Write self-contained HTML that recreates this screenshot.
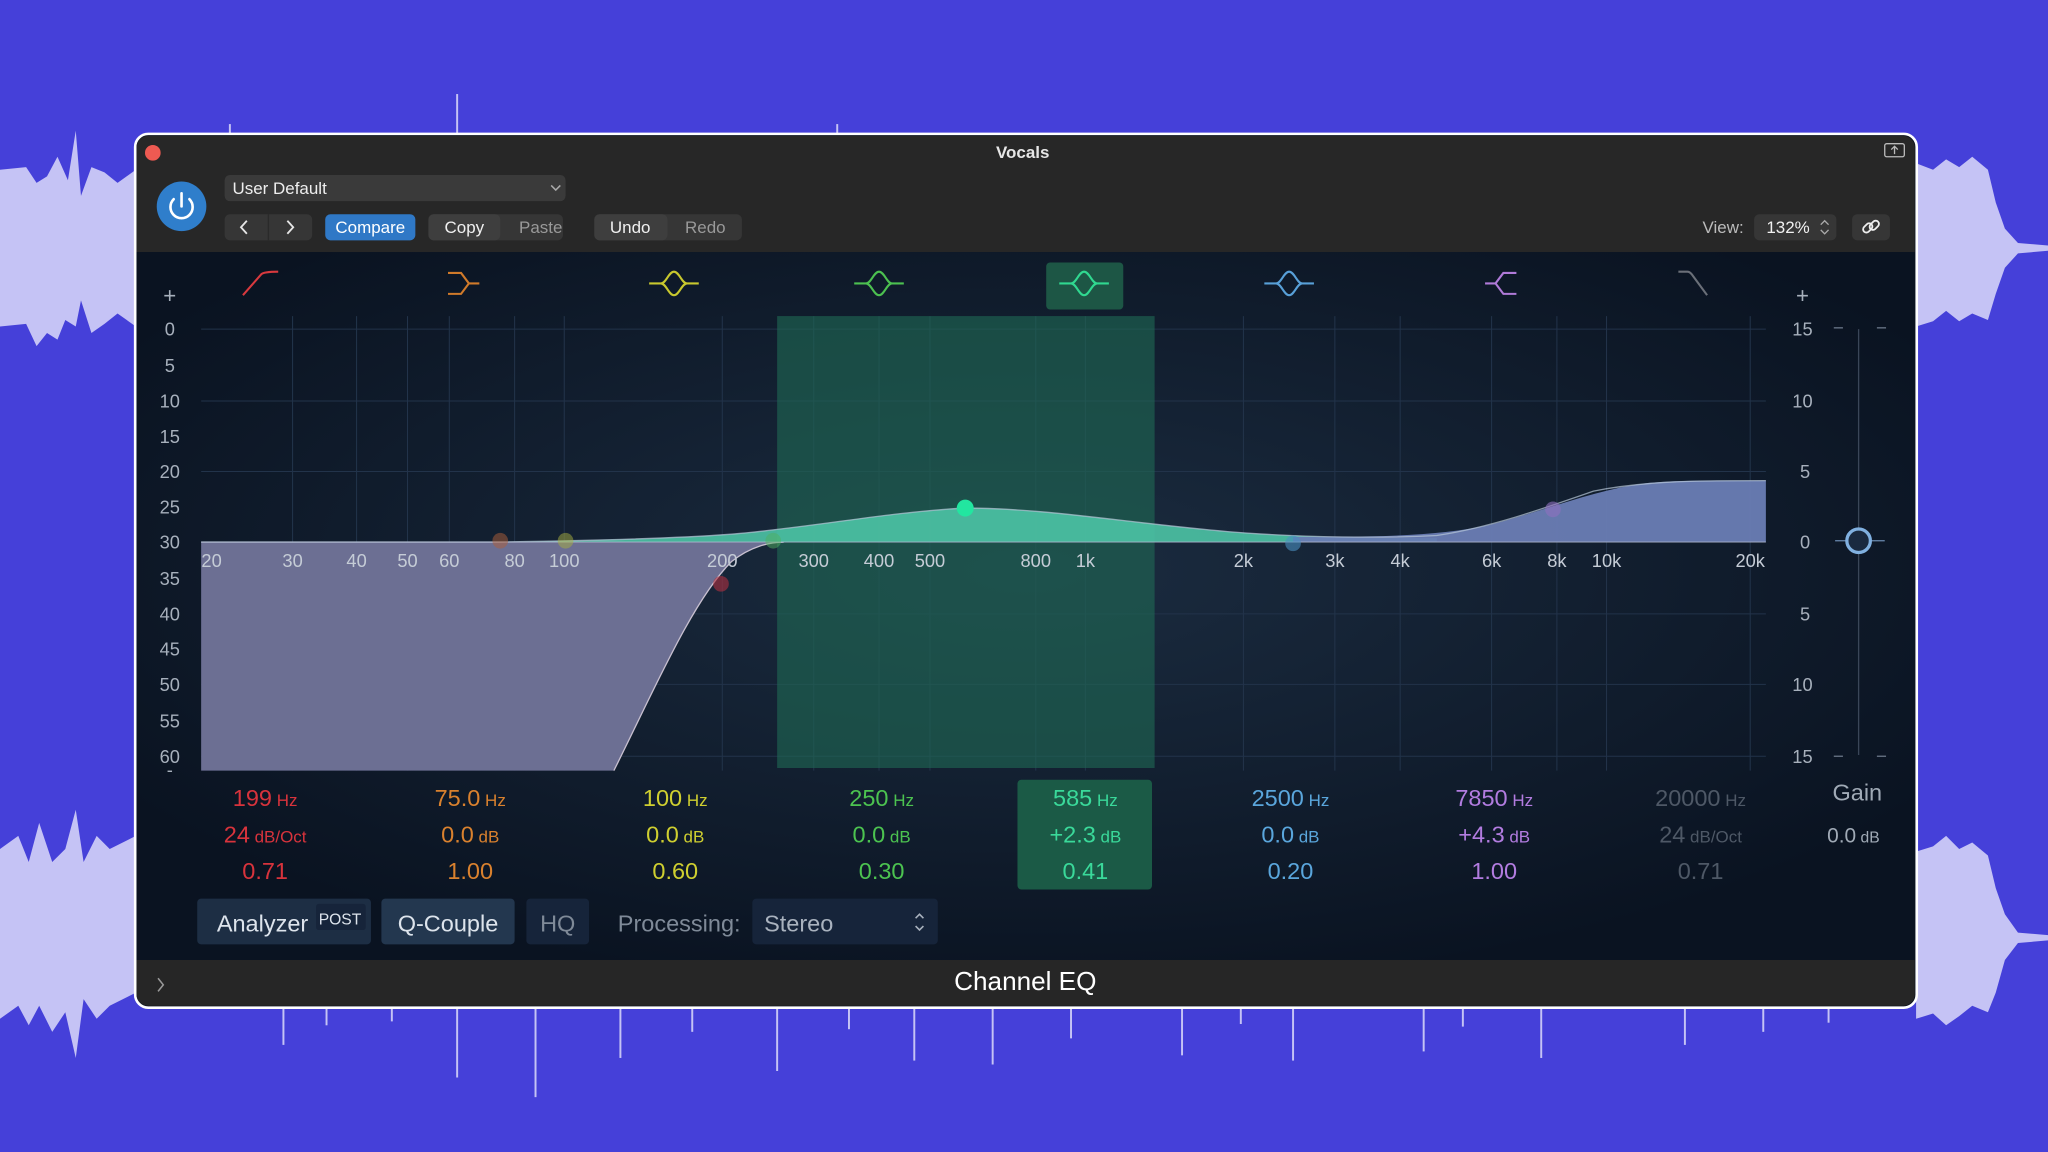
<!DOCTYPE html>
<html><head><meta charset="utf-8"><style>
html,body{margin:0;padding:0;background:#4540d9;overflow:hidden}
svg{display:block}
text{font-family:"Liberation Sans","DejaVu Sans",sans-serif}
</style></head><body>
<svg width="2048" height="1152" viewBox="0 0 1568 882" xmlns="http://www.w3.org/2000/svg">
<defs>
<radialGradient id="bg" cx="0.5" cy="0.45" r="0.6">
<stop offset="0" stop-color="#1b2c40"/><stop offset="1" stop-color="#0a1321"/>
</radialGradient>
</defs>
<rect width="1568" height="882" fill="#4540d9"/>
<g fill="#c5c3f5">
<path d="M0 130 L20 128 L28 140 L36 135 L44 120 L52 138 L58 100 L62 150 L70 128 L80 132 L90 140 L104 130 L104 250 L90 240 L80 248 L70 255 L62 230 L58 250 L50 245 L44 260 L36 255 L28 265 L20 248 L0 250 Z"/>
<path d="M0 650 L14 640 L22 660 L30 630 L40 660 L50 650 L58 620 L64 660 L74 640 L84 650 L104 640 L104 760 L84 770 L74 780 L64 765 L58 810 L50 775 L40 790 L30 770 L22 785 L14 770 L0 780 Z"/>
<path d="M1467 125 L1480 130 L1490 122 L1500 128 L1510 120 L1522 130 L1528 155 L1535 175 L1545 186 L1568 188 L1568 192 L1545 194 L1535 205 L1528 225 L1522 245 L1510 240 L1500 246 L1490 238 L1480 246 L1467 250 Z"/>
<path d="M1467 652 L1480 648 L1490 640 L1500 650 L1510 645 L1522 655 L1528 680 L1535 700 L1545 714 L1568 716 L1568 720 L1545 722 L1535 735 L1528 760 L1522 775 L1510 770 L1500 778 L1490 785 L1480 776 L1467 780 Z"/>
</g>
<g stroke="#c5c3f5" stroke-width="1.5">
<line x1="350" y1="72" x2="350" y2="103"/><line x1="176" y1="95" x2="176" y2="103"/><line x1="641" y1="95" x2="641" y2="103"/>
<line x1="410" y1="771" x2="410" y2="840"/><line x1="350" y1="771" x2="350" y2="825"/><line x1="217" y1="771" x2="217" y2="800"/>
<line x1="475" y1="771" x2="475" y2="810"/><line x1="595" y1="771" x2="595" y2="820"/><line x1="700" y1="771" x2="700" y2="812"/>
<line x1="760" y1="771" x2="760" y2="815"/><line x1="905" y1="771" x2="905" y2="808"/><line x1="990" y1="771" x2="990" y2="812"/>
<line x1="1090" y1="771" x2="1090" y2="805"/><line x1="1180" y1="771" x2="1180" y2="810"/><line x1="1290" y1="771" x2="1290" y2="800"/>
<line x1="530" y1="771" x2="530" y2="790"/><line x1="820" y1="771" x2="820" y2="795"/><line x1="1350" y1="771" x2="1350" y2="790"/>
<line x1="250" y1="771" x2="250" y2="785"/><line x1="300" y1="771" x2="300" y2="782"/><line x1="650" y1="771" x2="650" y2="788"/>
<line x1="950" y1="771" x2="950" y2="784"/><line x1="1120" y1="771" x2="1120" y2="786"/><line x1="1400" y1="771" x2="1400" y2="783"/>
</g>
<rect x="103.5" y="102.5" width="1364" height="669" rx="10" fill="#0b1320" stroke="#ffffff" stroke-width="2"/>
<path d="M104.5 193 V113 a9 9 0 0 1 9 -9 H1457 a9 9 0 0 1 9 9 V193 Z" fill="#272727"/>
<rect x="104.5" y="193" width="1361.5" height="542" fill="url(#bg)"/>
<path d="M104.5 735 H1466 V761 a9 9 0 0 1 -9 9 H113.5 a9 9 0 0 1 -9 -9 Z" fill="#262626"/>
<circle cx="117" cy="117" r="6" fill="#ee5a52"/>
<text x="783" y="121" font-size="13" font-weight="bold" fill="#e6e6e6" text-anchor="middle">Vocals</text>
<rect x="1443" y="110" width="15" height="10" rx="1.5" fill="none" stroke="#bbb" stroke-width="1"/>
<path d="M1450.5 112 v6 M1448 114.5 l2.5 -2.5 2.5 2.5" stroke="#bbb" fill="none" stroke-width="1"/>
<circle cx="139" cy="158" r="19" fill="#2f7ecb"/>
<path d="M133 152.5 a8.5 8.5 0 1 0 12 0" fill="none" stroke="#fff" stroke-width="2" stroke-linecap="round"/>
<line x1="139" y1="148" x2="139" y2="158" stroke="#fff" stroke-width="2" stroke-linecap="round"/>
<rect x="172" y="134" width="261" height="20" rx="4" fill="#3a3a3a"/>
<text x="178" y="148.5" font-size="13" fill="#eee">User Default</text>
<path d="M422 142 l3.5 3.5 3.5 -3.5" fill="none" stroke="#aaa" stroke-width="1.2"/>
<rect x="172" y="164" width="67" height="20" rx="4" fill="#363636"/>
<line x1="205.5" y1="164" x2="205.5" y2="184" stroke="#2a2a2a"/>
<path d="M189 169 l-4.5 5 4.5 5 M220 169 l4.5 5 -4.5 5" fill="none" stroke="#e6e6e6" stroke-width="1.4"/>
<rect x="249" y="164" width="69" height="20" rx="4" fill="#2f78c6"/>
<text x="283.5" y="178.5" font-size="13" fill="#fff" text-anchor="middle">Compare</text>
<rect x="328" y="164" width="103" height="20" rx="4" fill="#363636"/>
<rect x="328" y="164" width="55" height="20" rx="4" fill="#3e3e3e"/>
<text x="355.5" y="178.5" font-size="13" fill="#f0f0f0" text-anchor="middle">Copy</text>
<text x="414" y="178.5" font-size="13" fill="#999" text-anchor="middle">Paste</text>
<rect x="455" y="164" width="113" height="20" rx="4" fill="#363636"/>
<rect x="455" y="164" width="56" height="20" rx="4" fill="#3e3e3e"/>
<text x="482.5" y="178.5" font-size="13" fill="#f0f0f0" text-anchor="middle">Undo</text>
<text x="540" y="178.5" font-size="13" fill="#999" text-anchor="middle">Redo</text>
<text x="1335" y="178.5" font-size="13" fill="#bbb" text-anchor="end">View:</text>
<rect x="1343" y="164" width="63" height="20" rx="4" fill="#363636"/>
<text x="1369" y="178.5" font-size="13" fill="#f0f0f0" text-anchor="middle">132%</text>
<path d="M1394 172 l3 -3 3 3 M1394 176 l3 3 3 -3" fill="none" stroke="#aaa" stroke-width="1"/>
<rect x="1418" y="164" width="29" height="20" rx="4" fill="#363636"/>
<g fill="none" stroke="#eee" stroke-width="1.4"><rect x="1426" y="172" width="8" height="5" rx="2.5" transform="rotate(-45 1430 174.5)"/><rect x="1431" y="170" width="8" height="5" rx="2.5" transform="rotate(-45 1435 172.5)"/></g>
<g stroke="#22334a" stroke-width="0.8">
<line x1="154" x2="1352" y1="252" y2="252"/><line x1="154" x2="1352" y1="307" y2="307"/><line x1="154" x2="1352" y1="361" y2="361"/>
<line x1="154" x2="1352" y1="470" y2="470"/><line x1="154" x2="1352" y1="524" y2="524"/><line x1="154" x2="1352" y1="579" y2="579"/>
<line y1="242" y2="590" x1="224" x2="224"/><line y1="242" y2="590" x1="273" x2="273"/><line y1="242" y2="590" x1="312" x2="312"/>
<line y1="242" y2="590" x1="344" x2="344"/><line y1="242" y2="590" x1="394" x2="394"/><line y1="242" y2="590" x1="432" x2="432"/>
<line y1="242" y2="590" x1="553" x2="553"/><line y1="242" y2="590" x1="623" x2="623"/><line y1="242" y2="590" x1="673" x2="673"/>
<line y1="242" y2="590" x1="712" x2="712"/><line y1="242" y2="590" x1="793" x2="793"/><line y1="242" y2="590" x1="831" x2="831"/>
<line y1="242" y2="590" x1="952" x2="952"/><line y1="242" y2="590" x1="1022" x2="1022"/><line y1="242" y2="590" x1="1072" x2="1072"/>
<line y1="242" y2="590" x1="1142" x2="1142"/><line y1="242" y2="590" x1="1192" x2="1192"/><line y1="242" y2="590" x1="1230" x2="1230"/>
<line y1="242" y2="590" x1="1340" x2="1340"/>
</g>
<rect x="595" y="242" width="289" height="346" fill="#1f6a55" opacity="0.6"/>
<rect x="801" y="201" width="59" height="36" rx="3" fill="#1d5645"/>
<path d="M154 415 L154 590 L470 590 C500 530 530 460 560 430 C575 418 590 415 600 415 Z" fill="#6c6f93"/>
<path d="M470 590 C500 530 530 460 560 430 C575 418 590 415 600 415" fill="none" stroke="#c8c0d0" stroke-width="1"/>
<path d="M380 415 C450 414 520 412 560 409 C620 404 680 392 739 389 C800 389 860 400 940 407 C1000 412 1060 412 1100 412 L1100 415 Z" fill="#4cc3a5" opacity="0.9"/>
<path d="M990 415 L990 411 C1050 411 1100 411 1140 402 C1180 392 1220 375 1260 370 C1290 367 1320 368 1352 368 L1352 415 Z" fill="#6a7db4" opacity="0.95"/>
<path d="M154 415 L380 415 C450 414 520 412 560 409 C620 404 680 392 739 389 C800 389 860 400 940 407 C1000 412 1060 412 1100 410 C1140 404 1180 390 1220 376 C1260 368 1300 368 1352 368" fill="none" stroke="#b8c8d8" stroke-width="1" opacity="0.7"/>
<line x1="154" y1="415" x2="1352" y2="415" stroke="#b0b8d0" stroke-width="1" opacity="0.6"/>
<circle cx="383" cy="414" r="6" fill="#b0603a" opacity="0.5"/>
<circle cx="433" cy="414" r="6" fill="#a8b040" opacity="0.5"/>
<circle cx="552" cy="447" r="6" fill="#b03040" opacity="0.6"/>
<circle cx="592" cy="414" r="6" fill="#50b060" opacity="0.5"/>
<circle cx="990" cy="416" r="6" fill="#4a90c0" opacity="0.6"/>
<circle cx="1189" cy="390" r="6" fill="#9070c0" opacity="0.6"/>
<circle cx="739" cy="389" r="6.5" fill="#22e6a0"/>
<g fill="none" stroke-width="1.6">
<path d="M186 226 L200 210 Q202 208 213 208" stroke="#d8393e"/>
<path d="M343 209 h10 l6 8 h8 M343 225 h10 l6 -8" stroke="#d07a2a"/>
<path d="M497 217 h9 c4 0 6 -9 10 -9 c4 0 6 9 10 9 h9 M506 217 c4 0 6 9 10 9 c4 0 6 -9 10 -9" stroke="#c8c82e"/>
<path d="M654 217 h9 c4 0 6 -9 10 -9 c4 0 6 9 10 9 h9 M663 217 c4 0 6 9 10 9 c4 0 6 -9 10 -9" stroke="#4cc050"/>
<path d="M811 217 h9 c4 0 6 -9 10 -9 c4 0 6 9 10 9 h9 M820 217 c4 0 6 9 10 9 c4 0 6 -9 10 -9" stroke="#30d890"/>
<path d="M968 217 h9 c4 0 6 -9 10 -9 c4 0 6 9 10 9 h9 M977 217 c4 0 6 9 10 9 c4 0 6 -9 10 -9" stroke="#58a0d8"/>
<path d="M1161 209 h-10 l-6 8 h-8 M1161 225 h-10 l-6 -8" stroke="#b07ad8"/>
<path d="M1285 208 h7 q2 0 4 3 l11 15" stroke="#6a6f78"/>
</g>
<g font-size="14" fill="#a7b0bc" text-anchor="middle">
<text x="130" y="232" font-size="17">+</text>
<text x="130" y="257">0</text><text x="130" y="285">5</text><text x="130" y="312">10</text><text x="130" y="339">15</text>
<text x="130" y="366">20</text><text x="130" y="393">25</text><text x="130" y="420">30</text><text x="130" y="448">35</text>
<text x="130" y="475">40</text><text x="130" y="502">45</text><text x="130" y="529">50</text><text x="130" y="557">55</text>
<text x="130" y="584">60</text><text x="130" y="594">-</text>
<text x="1380" y="232" font-size="17">+</text>
<text x="1380" y="257">15</text><text x="1380" y="312">10</text><text x="1382" y="366">5</text><text x="1382" y="420">0</text>
<text x="1382" y="475">5</text><text x="1380" y="529">10</text><text x="1380" y="584">15</text>
</g>
<g stroke="#6a7688" stroke-width="1">
<line x1="1404" x2="1411" y1="251" y2="251"/><line x1="1437" x2="1444" y1="251" y2="251"/>
<line x1="1404" x2="1411" y1="579" y2="579"/><line x1="1437" x2="1444" y1="579" y2="579"/>
<line x1="1423" x2="1423" y1="252" y2="578" stroke="#3a4658"/>
<line x1="1405" x2="1443" y1="414" y2="414" stroke="#6a8ab0"/>
</g>
<circle cx="1423" cy="414" r="9" fill="#1a2a40" stroke="#80b0e0" stroke-width="2.5"/>
<g font-size="14" fill="#c5ccd6" text-anchor="middle">
<text x="162" y="434">20</text><text x="224" y="434">30</text><text x="273" y="434">40</text><text x="312" y="434">50</text>
<text x="344" y="434">60</text><text x="394" y="434">80</text><text x="432" y="434">100</text><text x="553" y="434">200</text>
<text x="623" y="434">300</text><text x="673" y="434">400</text><text x="712" y="434">500</text><text x="793" y="434">800</text>
<text x="831" y="434">1k</text><text x="952" y="434">2k</text><text x="1022" y="434">3k</text><text x="1072" y="434">4k</text>
<text x="1142" y="434">6k</text><text x="1192" y="434">8k</text><text x="1230" y="434">10k</text><text x="1340" y="434">20k</text>
</g>
<rect x="779" y="597" width="103" height="84" rx="3" fill="#1b5a46"/>
<g font-size="18" text-anchor="middle">
<g fill="#d8333c"><text x="203" y="617">199<tspan font-size="13"> Hz</tspan></text><text x="203" y="645">24<tspan font-size="13"> dB/Oct</tspan></text><text x="203" y="673">0.71</text></g>
<g fill="#d9812e"><text x="360" y="617">75.0<tspan font-size="13"> Hz</tspan></text><text x="360" y="645">0.0<tspan font-size="13"> dB</tspan></text><text x="360" y="673">1.00</text></g>
<g fill="#cfcf30"><text x="517" y="617">100<tspan font-size="13"> Hz</tspan></text><text x="517" y="645">0.0<tspan font-size="13"> dB</tspan></text><text x="517" y="673">0.60</text></g>
<g fill="#4cc350"><text x="675" y="617">250<tspan font-size="13"> Hz</tspan></text><text x="675" y="645">0.0<tspan font-size="13"> dB</tspan></text><text x="675" y="673">0.30</text></g>
<g fill="#3ad99a"><text x="831" y="617">585<tspan font-size="13"> Hz</tspan></text><text x="831" y="645">+2.3<tspan font-size="13"> dB</tspan></text><text x="831" y="673">0.41</text></g>
<g fill="#5aa6dc"><text x="988" y="617">2500<tspan font-size="13"> Hz</tspan></text><text x="988" y="645">0.0<tspan font-size="13"> dB</tspan></text><text x="988" y="673">0.20</text></g>
<g fill="#b27ce0"><text x="1144" y="617">7850<tspan font-size="13"> Hz</tspan></text><text x="1144" y="645">+4.3<tspan font-size="13"> dB</tspan></text><text x="1144" y="673">1.00</text></g>
<g fill="#4e5866"><text x="1302" y="617">20000<tspan font-size="13"> Hz</tspan></text><text x="1302" y="645">24<tspan font-size="13"> dB/Oct</tspan></text><text x="1302" y="673">0.71</text></g>
<g fill="#a0aab6"><text x="1422" y="613">Gain</text><text x="1419" y="645" font-size="16">0.0<tspan font-size="12"> dB</tspan></text></g>
</g>
<rect x="151" y="688" width="133" height="35" rx="3" fill="#1d2e44"/>
<rect x="242" y="692" width="38" height="20" rx="2" fill="#16243a"/>
<text x="166" y="713" font-size="18" fill="#dde4ec">Analyzer</text>
<text x="244" y="708" font-size="12" fill="#dde4ec">POST</text>
<rect x="292" y="688" width="102" height="35" rx="3" fill="#23374f"/>
<text x="343" y="713" font-size="18" fill="#dde4ec" text-anchor="middle">Q-Couple</text>
<rect x="403" y="688" width="48" height="35" rx="3" fill="#16243a"/>
<text x="427" y="713" font-size="18" fill="#7f8a98" text-anchor="middle">HQ</text>
<text x="473" y="713" font-size="18" fill="#7f8a98">Processing:</text>
<rect x="576" y="688" width="142" height="35" rx="3" fill="#16243a"/>
<text x="585" y="713" font-size="18" fill="#a9b2be">Stereo</text>
<path d="M701 703 l3 -3 3 3 M701 709 l3 3 3 -3" fill="none" stroke="#a9b2be" stroke-width="1.2"/>
<text x="785" y="758" font-size="20" fill="#ffffff" text-anchor="middle">Channel EQ</text>
<path d="M121 749 l4 5 -4 5" fill="none" stroke="#999" stroke-width="1.2"/>
</svg>
</body></html>
